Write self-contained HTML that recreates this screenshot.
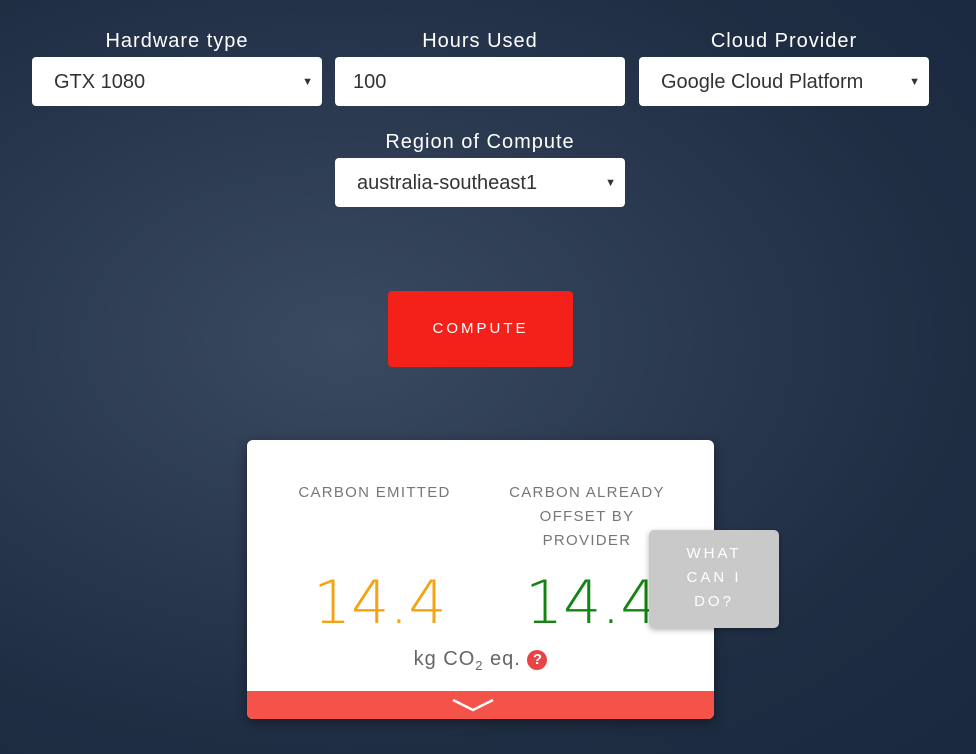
<!DOCTYPE html>
<html><head><style>
*{box-sizing:border-box;margin:0;padding:0}
body{width:976px;height:754px;overflow:hidden;font-family:"Liberation Sans",sans-serif;
background:radial-gradient(ellipse at 35% 45%,#3a4a60 0%,#2c3b52 35%,#1f2d43 70%,#1a2840 100%);position:relative}
.lbl{position:absolute;color:#fff;font-size:20px;letter-spacing:1px;text-align:center}
.sel{position:absolute;background:#fff;border-radius:4px;height:49px;font-size:20px;color:#333;padding-left:22px;line-height:51px}
.arr{position:absolute;right:9px;top:0;font-size:11px;color:#333}
.card{position:absolute;left:247px;top:440px;width:467px;height:279px;background:#fff;border-radius:6px;overflow:hidden;box-shadow:0 4px 12px rgba(0,0,0,.4)}
.h{position:absolute;color:#777;font-size:15px;letter-spacing:1.3px;text-align:center;line-height:24px}
.n{position:absolute;font-family:"DejaVu Sans","Liberation Sans",sans-serif;font-size:60px;font-weight:200;top:128px;line-height:70px;letter-spacing:0px}
</style></head><body>
<div class="lbl" style="left:32px;width:290px;top:30px">Hardware type</div>
<div class="lbl" style="left:335px;width:290px;top:30px">Hours Used</div>
<div class="lbl" style="left:639px;width:290px;top:30px">Cloud Provider</div>
<div class="sel" style="left:32px;top:57px;width:290px">GTX 1080<span class="arr">▼</span></div>
<div class="sel" style="left:335px;top:57px;width:290px;padding-left:18px">100</div>
<div class="sel" style="left:639px;top:57px;width:290px">Google Cloud Platform<span class="arr">▼</span></div>
<div class="lbl" style="left:335px;width:290px;top:131px">Region of Compute</div>
<div class="sel" style="left:335px;top:158px;width:290px">australia-southeast1<span class="arr">▼</span></div>
<div style="position:absolute;left:388px;top:291px;width:185px;height:76px;background:#f4211a;border-radius:4px;color:#fff;font-size:15px;letter-spacing:3px;text-align:center;line-height:76px">COMPUTE</div>
<div class="card">
<div class="h" style="left:30px;width:195px;top:41px">CARBON EMITTED</div>
<div class="h" style="left:245px;width:190px;top:41px">CARBON ALREADY<br>OFFSET BY<br>PROVIDER</div>
<div class="n" style="left:66px;color:#f6a313">14.4</div>
<div class="n" style="left:278px;color:#118411">14.4</div>
<div style="position:absolute;left:0;width:467px;top:208px;text-align:center;font-size:20px;color:#666;letter-spacing:1px">kg CO<sub style="font-size:13px">2</sub> eq. <span style="display:inline-block;width:20px;height:20px;border-radius:50%;background:#e94444;color:#fff;font-size:15px;font-weight:bold;line-height:20px;letter-spacing:0;vertical-align:1px">?</span></div>
<div style="position:absolute;left:0;bottom:0;width:467px;height:28px;background:#f5524a">
<svg width="467" height="28"><path d="M206 9 L226 19 L246 9" stroke="#fff" stroke-width="2.5" fill="none"/></svg></div>
</div>
<div style="position:absolute;left:649px;top:530px;width:130px;height:98px;background:#c9c9c9;border-radius:5px;color:#fff;font-size:15px;letter-spacing:3px;text-align:center;line-height:24px;padding-top:12px;box-shadow:0 2px 6px rgba(0,0,0,.3)">WHAT<br>CAN I<br>DO?</div>
</body></html>
